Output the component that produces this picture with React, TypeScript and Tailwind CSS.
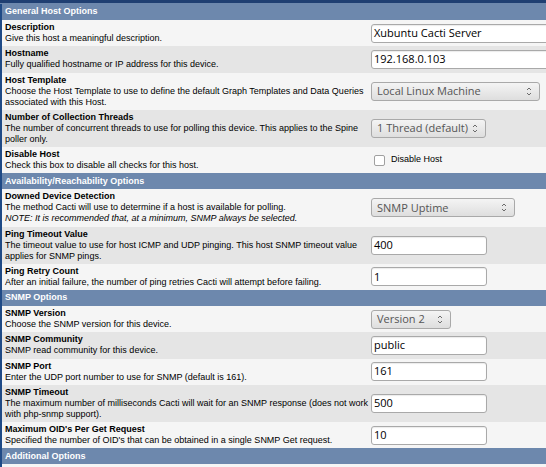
import React from 'react'

type Field =
  | { kind: 'text'; value: string; width: string }
  | { kind: 'select'; value: string; width: string }
  | { kind: 'check'; label: string }

interface Row {
  title: string
  lines: React.ReactNode[]
  field: Field
}

interface Section {
  title: string
  rows: Row[]
}

const sections: Section[] = [
  {
    title: 'General Host Options',
    rows: [
      { title: 'Description', lines: ['Give this host a meaningful description.'], field: { kind: 'text', value: 'Xubuntu Cacti Server', width: 'w-[200px]' } },
      { title: 'Hostname', lines: ['Fully qualified hostname or IP address for this device.'], field: { kind: 'text', value: '192.168.0.103', width: 'w-[200px]' } },
      {
        title: 'Host Template',
        lines: ['Choose the Host Template to use to define the default Graph Templates and Data Queries', 'associated with this Host.'],
        field: { kind: 'select', value: 'Local Linux Machine', width: 'w-[169px]' },
      },
      {
        title: 'Number of Collection Threads',
        lines: ['The number of concurrent threads to use for polling this device. This applies to the Spine', 'poller only.'],
        field: { kind: 'select', value: '1 Thread (default)', width: 'w-[115px]' },
      },
      { title: 'Disable Host', lines: ['Check this box to disable all checks for this host.'], field: { kind: 'check', label: 'Disable Host' } },
    ],
  },
  {
    title: 'Availability/Reachability Options',
    rows: [
      {
        title: 'Downed Device Detection',
        lines: ['The method Cacti will use to determine if a host is available for polling.', <i key="n">NOTE: It is recommended that, at a minimum, SNMP always be selected.</i>],
        field: { kind: 'select', value: 'SNMP Uptime', width: 'w-[144px]' },
      },
      {
        title: 'Ping Timeout Value',
        lines: ['The timeout value to use for host ICMP and UDP pinging. This host SNMP timeout value', 'applies for SNMP pings.'],
        field: { kind: 'text', value: '400', width: 'w-[116px]' },
      },
      {
        title: 'Ping Retry Count',
        lines: ['After an initial failure, the number of ping retries Cacti will attempt before failing.'],
        field: { kind: 'text', value: '1', width: 'w-[116px]' },
      },
    ],
  },
  {
    title: 'SNMP Options',
    rows: [
      { title: 'SNMP Version', lines: ['Choose the SNMP version for this device.'], field: { kind: 'select', value: 'Version 2', width: 'w-[80px]' } },
      { title: 'SNMP Community', lines: ['SNMP read community for this device.'], field: { kind: 'text', value: 'public', width: 'w-[116px]' } },
      { title: 'SNMP Port', lines: ['Enter the UDP port number to use for SNMP (default is 161).'], field: { kind: 'text', value: '161', width: 'w-[116px]' } },
      {
        title: 'SNMP Timeout',
        lines: ['The maximum number of milliseconds Cacti will wait for an SNMP response (does not work', 'with php-snmp support).'],
        field: { kind: 'text', value: '500', width: 'w-[116px]' },
      },
      {
        title: "Maximum OID's Per Get Request",
        lines: ["Specified the number of OID's that can be obtained in a single SNMP Get request."],
        field: { kind: 'text', value: '10', width: 'w-[116px]' },
      },
    ],
  },
]

function Spinner() {
  return (
    <svg width="6" height="11" viewBox="0 0 6 11" className="shrink-0">
      <path d="M1 4 L3 2 L5 4" fill="none" stroke="#6b6b6b" strokeWidth="1" />
      <path d="M1 7 L3 9 L5 7" fill="none" stroke="#6b6b6b" strokeWidth="1" />
    </svg>
  )
}

function FieldCell({ field }: { field: Field }) {
  if (field.kind === 'text') {
    return (
      <div
        className={`${field.width} flex h-[19px] shrink-0 items-center whitespace-nowrap rounded-[3px] border border-[#a9a9a9] bg-white pl-[2px] text-[11px] text-black shadow-[inset_0_1px_1px_rgba(0,0,0,0.08)]`}
        style={{ fontFamily: '"Open Sans", "DejaVu Sans", sans-serif' }}
      >
        {field.value}
      </div>
    )
  }
  if (field.kind === 'select') {
    return (
      <div
        className={`${field.width} flex h-[19px] shrink-0 items-center justify-between whitespace-nowrap rounded-[3px] border border-[#a9a9a9] bg-gradient-to-b from-[#f4f4f4] to-[#dedede] pl-[5px] pr-[7px] text-[11px] text-[#555555]`}
        style={{ fontFamily: '"Open Sans", "DejaVu Sans", sans-serif' }}
      >
        <span>{field.value}</span>
        <Spinner />
      </div>
    )
  }
  return (
    <div className="flex items-center gap-[6px] pl-[3px]">
      <div className="h-[11px] w-[11px] rounded-[2px] border border-[#a0a0a0] bg-white" />
      <span className="text-[9px] text-black">{field.label}</span>
    </div>
  )
}

export default function App() {
  return (
    <div
      className="h-[467px] w-[546px] overflow-hidden bg-[#f5f5f5]"
      style={{ fontFamily: '"Liberation Sans", Arial, sans-serif' }}
    >
      <div className="h-[4px] border-t-[3px] border-[#1f3f72] bg-[#6d88ad]" />
      <div className="border-l-2 border-[#1f4a86]">
        {sections.map((section) => (
          <div key={section.title}>
            <div className="flex h-[16px] items-center bg-[#6d88ad] pl-[3px] text-[9px] font-bold text-white">
              {section.title}
            </div>
            {section.rows.map((row, i) => (
              <div
                key={row.title}
                className={`flex ${i % 2 === 0 ? 'bg-[#f5f5f5]' : 'bg-[#e5e5e5]'}`}
              >
                <div className="w-[367px] shrink-0 pb-[2.25px] pt-[2px] pl-[3px] text-[9px] leading-[11px] text-black">
                  <div className="font-bold">{row.title}</div>
                  {row.lines.map((line, j) => (
                    <div key={j} className="whitespace-nowrap">{line}</div>
                  ))}
                </div>
                <div className="flex min-w-0 flex-1 items-center overflow-hidden pl-[2px]">
                  <FieldCell field={row.field} />
                </div>
              </div>
            ))}
          </div>
        ))}
        <div className="flex h-[16px] items-center bg-[#6d88ad] pl-[3px] text-[9px] font-bold text-white">
          Additional Options
        </div>
        <div className="h-[10px] bg-[#f5f5f5]" />
      </div>
    </div>
  )
}
